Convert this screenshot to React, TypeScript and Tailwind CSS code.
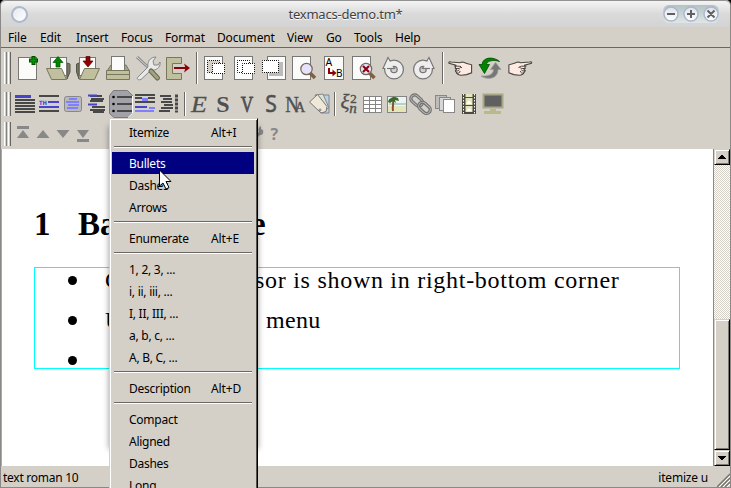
import type { ReactNode } from "react";

const UI = "font-['Noto_Sans','Open_Sans',sans-serif]";
const ROMAN = "font-['Liberation_Serif',serif]";

/* Icons share the window's coordinate space: each cell is a view onto it. */
function Cell({ x, y, s, h, children }: { x: number; y: number; s: number; h?: number; children?: ReactNode }) {
  return (
    <svg width={s} height={h ?? s} viewBox={`${x} ${y} ${s} ${h ?? s}`} className="block shrink-0 overflow-visible">
      {children}
    </svg>
  );
}

function Grip({ tall }: { tall?: boolean }) {
  return (
    <div className={`flex shrink-0 gap-px ${tall ? "h-8" : "h-6"} w-[9px] pl-0.5 mr-0.5`}>
      <div className="w-[3px] border-l border-r border-l-white border-r-[#85827c]" />
      <div className="w-[3px] border-l border-r border-l-white border-r-[#666460]" />
    </div>
  );
}

function Separator({ className }: { className: string }) {
  return <div className={`w-0.5 shrink-0 border-l border-r border-l-[#6a6864] border-r-white ${className}`} />;
}

const menus: [string, string][] = [
  ["File", "w-[32px]"],
  ["Edit", "w-[36px]"],
  ["Insert", "w-[45px]"],
  ["Focus", "w-[44px]"],
  ["Format", "w-[52px]"],
  ["Document", "w-[70px]"],
  ["View", "w-[39px]"],
  ["Go", "w-[28px]"],
  ["Tools", "w-[41px]"],
  ["Help", "w-[40px]"],
];

function TitleBar() {
  return (
    <div className="flex h-[27px] items-center rounded-t-[5px] border-t border-t-[#929292] bg-linear-to-b from-[#f4f4f4] via-[#dadada] via-50% to-[#d3d3d3] pl-[10px] pr-[10px]">
      <div className="size-[17px] rounded-full border-2 border-[#aeb9ca] bg-linear-to-br from-[#e4e9f0] to-white" />
      <div className="flex-1 pl-[1px] text-center text-[13px] leading-[28px] tracking-[-0.22px] text-[#414141] [text-shadow:0_1px_0_#fff]">texmacs-demo.tm*</div>
      <svg width="58" height="20" viewBox="662 4 58 20">
        <defs>
          <linearGradient id="ball" x2="0" y2="1"><stop stopColor="#dde2e9" /><stop offset="1" stopColor="#fff" /></linearGradient>
          <linearGradient id="halo" x2="0" y2="1"><stop stopColor="#b3c2c4" /><stop offset="1" stopColor="#dfe7e6" /></linearGradient>
        </defs>
        <rect x="663" y="5" width="56" height="18" rx="6" fill="url(#halo)" />
        {[671, 691, 711].map((x) => <circle key={x} cx={x} cy="14" r="7" fill="url(#ball)" stroke="#abb5cc" strokeWidth="1.4" />)}
        <path d="M667 14h8M687 14h8M691 10v8M707.5 10.5l7 7M714.5 10.5l-7 7" stroke="#626262" strokeWidth="2" />
      </svg>
    </div>
  );
}

function MenuBar() {
  return (
    <div className="flex h-[21px] border-b border-[#6a6864] pl-[7px]">
      {menus.map(([name, w]) => (
        <div key={name} className={`${w} shrink-0 whitespace-nowrap text-[12px] leading-[22px] tracking-[-0.15px]`}>{name}</div>
      ))}
    </div>
  );
}

const hand = (
  <>
    <path d="M449 63.2C448.400 62 449.600 61.700 451 62l9 .8 1.800-.8c3 .3 4 1.500 6 1.800l3.800 1v8l-5 1.800-5.200.6c-3-.2-4.500-1.200-4.800-2.600l-1.200-1.600 1-1.800-1-1.500.500-2.500L449 63.200Z" fill="#fdeae2" stroke="#484440" strokeWidth="1.100" />
    <path d="M454 66l5 .2c2 0 2 2 0 2.200l-4.200.2M455 70.500c2 .8 4 .5 4.200-1M456.500 73c1.800.5 3.600 0 3.500-2M460 66l2 2" fill="none" stroke="#484440" />
  </>
);

function Dotted({ x, y, w, h, fill }: { x: number; y: number; w: number; h: number; fill: string }) {
  return <rect x={x} y={y} width={w} height={h} fill={fill} stroke="#111" strokeDasharray="1 1" strokeDashoffset=".5" />;
}

function MainToolbar() {
  const paper = { fill: "#fbfbfa", stroke: "#777", strokeWidth: 1 };
  const lens = (
    <>
      <path d="M310 73l5 5" stroke="#80603f" strokeWidth="3.500" />
      <circle cx="306.500" cy="69" r="5.700" fill="#e6e2fb" stroke="#76665b" strokeWidth="1.200" />
    </>
  );
  const undo = (
    <>
      <circle cx="394" cy="69.500" r="6.300" fill="none" stroke="#777" strokeWidth="7.500" />
      <path d="M383 68.500L388 57.500l6.500 11Z" fill="#eee" stroke="#777" strokeWidth="1.200" />
      <circle cx="394" cy="69.500" r="6.300" fill="none" stroke="#eee" strokeWidth="5" />
      <path d="M384.300 67.700L388.200 59.500l3.300 6Z" fill="#eee" />
      <path d="M387 68.500h7" stroke="#777" strokeWidth="1.200" />
    </>
  );
  return (
    <div className="flex h-[40px] items-center pl-px">
      <Grip tall />
      <Cell x={13} y={53} s={30}>
        <rect x="18.500" y="57.500" width="18" height="22" {...paper} />
        <path d="M33.500 56v9M29 60.500h9" stroke="#004d00" strokeWidth="4" /><path d="M33.500 57v7M30 60.500h7" stroke="#009500" strokeWidth="2" />
      </Cell>
      <Cell x={43} y={53} s={30}>
        <path d="M67 63l3 1v8l-3 7Z" fill="#787862" stroke="#555547" />
        <rect x="50.500" y="57.500" width="16" height="18" {...paper} />
        <path d="M46.500 68.500h15l5 11h-15Z" fill="#c0c09e" stroke="#77775e" />
        <path d="M58 56.500l-5 6h3V67h4v-4.500h3Z" fill="#008500" stroke="#005300" strokeWidth=".7" />
      </Cell>
      <Cell x={73} y={53} s={30}>
        <path d="M79 63l-2.500 1v8l2.500 7Z" fill="#787862" stroke="#555547" />
        <rect x="79.500" y="57.500" width="16" height="18" {...paper} />
        <path d="M84.500 68.500h15l-5 11h-15Z" fill="#c0c09e" stroke="#77775e" />
        <path d="M88 67l-5-6h3v-4.500h4V61h3Z" fill="#900000" stroke="#5a0000" strokeWidth=".7" />
      </Cell>
      <Cell x={103} y={53} s={30}>
        <path d="M107 71l4-6h15l3.500 6Z" fill="#a4a485" stroke="#77775e" />
        <rect x="111.500" y="56.500" width="13" height="14" {...paper} />
        <path d="M106.500 70.500h23v9h-23ZM106.500 74.500h23" fill="#c0c09e" stroke="#77775e" />
      </Cell>
      <Cell x={133} y={53} s={30}>
        <path d="M137 57l15 14" stroke="#888" strokeWidth="3" /><path d="M137 57l15 14" stroke="#ddd" />
        <path d="M138 77l10-10c-1-5 2-10 8-10l-3 4 1 4 4 0 2-3c1 6-5 9-9 8l-10 9.500c-3 1-5-1-3-2.500Z" fill="#e9e9e9" stroke="#888" />
        <path d="M151 71l6.500 7" stroke="#66664e" strokeWidth="5" strokeLinecap="round" /><path d="M151 71l6.500 7" stroke="#a2a27c" strokeWidth="3" strokeLinecap="round" />
      </Cell>
      <Cell x={163} y={53} s={30}>
        <path d="M166.500 57.500h15v6h-9v10h9v6h-15Z" fill="#c0c09e" stroke="#77775e" />
        <path d="M174 68h12" stroke="#8b0007" strokeWidth="2" /><path d="M184 63.500l6 4.500-6 4.500 1.500-4.500Z" fill="#8b0007" />
      </Cell>
      <Separator className="ml-[3px] mr-[2px] h-8" />
      {[200, 230].map((x, i) => (
        <Cell key={x} x={x} y={53} s={30}>
          <g transform={`translate(${x - 200})`}>
            <rect x="204.500" y="56.500" width="18" height="23" {...paper} />
            <Dotted x={207.5} y={60.5} w={12} h={12} fill={i ? "#fff" : "#d4d0c8"} />
            <Dotted x={212.5} y={63.5} w={12} h={10} fill="#fff" />
          </g>
        </Cell>
      ))}
      <Cell x={260} y={53} s={30}>
        <rect x="267.500" y="56.500" width="18" height="23" {...paper} /><rect x="269" y="62" width="14" height="14" fill="#bbb" />
        <Dotted x={262.5} y={60.5} w={16} h={12} fill="#fff" />
      </Cell>
      <Cell x={290} y={53} s={30}><rect x="292.500" y="56.500" width="18" height="23" {...paper} />{lens}</Cell>
      <Cell x={320} y={53} s={30}>
        <rect x="324.500" y="56.500" width="19" height="23" {...paper} />
        <text x="325.500" y="66" fontSize="10.500" fontFamily="Noto Sans">A</text><text x="336" y="77" fontSize="10" fontFamily="Noto Sans">B</text>
        <path d="M329 68v5h5" fill="none" stroke="#8b0007" strokeWidth="2" /><path d="M332.500 69.500l4 3.500-4 3.500Z" fill="#8b0007" />
      </Cell>
      <Cell x={350} y={53} s={30}>
        <rect x="352.500" y="56.500" width="18" height="23" {...paper} /><g transform="translate(59.500)">{lens}</g>
        <path d="M363 66l6 6M369 66l-6 6" stroke="#8b0007" strokeWidth="2" />
      </Cell>
      <Cell x={380} y={53} s={30}>{undo}</Cell>
      <Cell x={410} y={53} s={30}><g transform="translate(817) scale(-1 1)">{undo}</g></Cell>
      <Separator className="ml-[2px] mr-[2px] h-8" />
      <Cell x={446} y={53} s={30}>{hand}</Cell>
      <Cell x={476} y={53} s={30}>
        <path d="M499.500 61.500C494 56.500 483 56.500 482 64.500h-3l5.500 9 5-9h-3c0-4 8-5 13-3Z" fill="#008500" stroke="#004d00" strokeWidth=".8" />
        <path d="M481 76c6 4 17 3.500 17-6.500h3l-5.500-7-5 7h3c0 6-7 7-12.500 6.500Z" fill="#777" stroke="#999" strokeWidth=".8" />
      </Cell>
      <Cell x={506} y={53} s={30}><g transform="translate(980.500) scale(-1 1)">{hand}</g></Cell>
    </div>
  );
}

function Bars({ d, color = "#484848" }: { d: string; color?: string }) {
  return <path d={d} stroke={color} strokeWidth="2" fill="none" />;
}

function ModeToolbar() {
  const letter = { fill: "#505050", textAnchor: "middle" as const, fontFamily: "Liberation Serif" };
  return (
    <div className="flex h-[31px] items-center pl-px pt-px">
      <Grip />
      <Cell x={13} y={92} s={24}><path d="M15 96.500h16" stroke="#4545cc" strokeWidth="3" /><Bars d="M15 100h20M15 103h20M15 106h20M15 109h20M15 112h20" /></Cell>
      <Cell x={37} y={92} s={24}>
        <Bars d="M39 96h20M39 111h20" /><Bars color="#4545cc" d="M48 102h11M39 107h20" />
        <text x="39" y="105" fontSize="6" fontWeight="bold" fontFamily="DejaVu Sans" fill="#4545cc" textLength="8" lengthAdjust="spacingAndGlyphs">TH</text>
      </Cell>
      <Cell x={61} y={92} s={24}>
        <rect x="64.500" y="96.500" width="17" height="15" rx="2" fill="#b9b9b9" stroke="#888" /><Bars color="#8080ff" d="M69 99h8M66 102h13M68 105h11M67 108h11" />
      </Cell>
      <Cell x={85} y={92} s={24}><Bars d="M90 96h12M91 99h13M90 101h13M92 107h13M90 110h15M93 112h11" /><Bars color="#4545cc" d="M88 95.500h9M88 104.500h9" /></Cell>
      <Cell x={109} y={90} s={24} h={28}>
        <path d="M113.500 90.500h14l5 5v18l-4.500 4h-14l-4.500-4v-18Z" fill="#a2a2a8" stroke="#7b7b7f" /><path d="M128 117.500l4.500-4V96" fill="none" stroke="#fff" />
        <Bars d="M117 97h15M117 104h15M117 111h15" /><circle cx="113.500" cy="97" r="1.300" /><circle cx="113.500" cy="104" r="1.300" /><circle cx="113.500" cy="111" r="1.300" />
      </Cell>
      <Cell x={133} y={92} s={24}><Bars d="M135 95h20M135 98h7M148 98h7M135 102h20" /><path d="M142 99.500h6" stroke="#8080ff" strokeWidth="3" /><Bars color="#4545cc" d="M135 107h12" /><Bars color="#8080ff" d="M149 108h6M135 111h19" /></Cell>
      <Cell x={157} y={92} s={24}><Bars d="M160 96h11M163 99h9M161 102h11M164 105h9M161 108h12M159 111h11" /><path d="M176.500 94.500v18" stroke="#484848" strokeWidth="3" strokeDasharray="3 1" /></Cell>
      <Separator className="ml-[3px] mr-[2px] h-6" />
      <Cell x={188} y={92} s={24}><text transform="translate(199 112) scale(1.080 1)" {...letter} fontSize="24" fontStyle="italic" stroke="#505050" strokeWidth=".3">E</text></Cell>
      <Cell x={212} y={92} s={24}><text x="223" y="112" {...letter} fontSize="24" fontWeight="bold">S</text></Cell>
      <Cell x={236} y={92} s={24}><text transform="translate(247 112) scale(.75 1)" {...letter} fontSize="23" stroke="#505050" strokeWidth=".8">V</text></Cell>
      <Cell x={260} y={92} s={24}><text transform="translate(271 112) scale(.92 1)" {...letter} fontSize="23" fontFamily="Noto Sans" stroke="#505050" strokeWidth=".5">S</text></Cell>
      <Cell x={284} y={92} s={24}>
        <text transform="translate(292 112) scale(.82 1)" {...letter} fontSize="23" stroke="#505050" strokeWidth=".4">N</text><text x="300" y="112" {...letter} fontSize="14" stroke="#505050" strokeWidth=".4">A</text>
      </Cell>
      <Cell x={308} y={92} s={24}>
        <path d="M316 95h13v18h-8Z" fill="#bdd0e6" stroke="#7a8799" /><path d="M315 95l8-1 6 14-7 3Z" fill="#d9e3d2" stroke="#888" />
        <path d="M309.500 102l8-7.500 9.500 12-1 5-5 1.500Z" fill="#eee8d9" stroke="#777" /><circle cx="320" cy="110" r="1" fill="#fff" stroke="#777" />
      </Cell>
      <Separator className="ml-[2px] mr-[2px] h-6" />
      <Cell x={338} y={92} s={24}>
        <text x="345" y="109" {...letter} fontSize="21" fontStyle="italic" stroke="#505050" strokeWidth=".3">ξ</text><text x="353.500" y="103" {...letter} fontSize="13" stroke="#505050" strokeWidth=".4">2</text><text x="353" y="113" {...letter} fontSize="15" fontStyle="italic" stroke="#505050" strokeWidth=".4">n</text>
      </Cell>
      <Cell x={362} y={92} s={24}><path d="M363.500 96.500h18v16h-18ZM363.500 100.500h18M363.500 104.500h18M363.500 108.500h18M369.500 96.500v16M375.500 96.500v16" fill="#fff" stroke="#858585" /></Cell>
      <Cell x={386} y={92} s={24}>
        <rect x="387.500" y="96.500" width="19" height="16" fill="#e9f5f3" stroke="#858585" /><path d="M389 103h17v2h-17Z" fill="#b6cfd0" /><path d="M388 106h18v6h-18Z" fill="#e4e5b8" />
        <path d="M393 111c-1-5 1-7 0-11" stroke="#875033" strokeWidth="2" fill="none" /><path d="M388 102c1-4 3-4 5-4l-2-1h4l3 1 1 3-4-1 1 3-3-2-3 2Z" fill="#386b25" />
      </Cell>
      <Cell x={410} y={92} s={24}>
        {["rotate(42 416.500 100)", "rotate(42 425 108)"].map((t, i) => (
          <g key={t} transform={t}><rect x={i ? 418 : 410.5} y={i ? 104.5 : 96.5} width="13" height="7.500" rx="3.700" fill="none" stroke="#707070" strokeWidth="3.200" /><rect x={i ? 418 : 410.5} y={i ? 104.5 : 96.5} width="13" height="7.500" rx="3.700" fill="none" stroke="#bbb" strokeWidth="1" /></g>
        ))}
      </Cell>
      <Cell x={434} y={92} s={24}><g stroke="#888"><rect x="435.500" y="95.500" width="11" height="13" fill="#bcbcbc" /><rect x="439.500" y="97.500" width="11" height="13" fill="#d6d6d6" /><rect x="443.500" y="99.500" width="11" height="13" fill="#fff" /></g></Cell>
      <Cell x={458} y={92} s={24}>
        <rect x="462" y="94" width="14" height="20" fill="#4b4b40" /><path d="M463.500 94v20M474.500 94v20" stroke="#fff" strokeDasharray="1.500 1.500" />
        <path d="M465.500 94h7v3h-7ZM465.500 98h7v7h-7ZM465.500 106h7v6h-7Z" fill="#e5e5bc" /><path d="M466 104l3-4 3 4ZM466 111l3-3 3 3Z" fill="#fff" />
      </Cell>
      <Cell x={482} y={92} s={24}><rect x="483.500" y="94.500" width="19" height="13" fill="#606060" stroke="#a8a886" strokeWidth="2" /><path d="M490 109h6v2h5v3h-17v-3h6Z" fill="#b9b98b" /></Cell>
    </div>
  );
}

function FocusToolbar() {
  return (
    <div className="flex h-[30px] items-center pl-px">
      <Grip />
      <Cell x={13} y={124} s={20}><path d="M17 126h12v3H17ZM17 138l6-8 6 8Z" fill="#888" /></Cell>
      <Cell x={33} y={124} s={20}><path d="M36.500 138l6.500-8 6.500 8Z" fill="#888" /></Cell>
      <Cell x={53} y={124} s={20}><path d="M56.500 130l6.500 8 6.500-8Z" fill="#888" /></Cell>
      <Cell x={73} y={124} s={20}><path d="M77 130l6 8 6-8ZM77 139h12v3H77Z" fill="#888" /></Cell>
      <div className="w-[152px]" />
      <Cell x={245} y={124} s={20}><path d="M250 140l9-8c-1-3 0-5 2-6v3l2 1c1 4-1 5-3 5l-6 6Z" fill="#888" /></Cell>
      <Cell x={265} y={124} s={20}><text x="270.500" y="140" fontSize="16" fontWeight="bold" fontFamily="Noto Sans" fill="#888">?</text></Cell>
    </div>
  );
}

function Bullet() {
  return <div className="mt-[8px] size-[9px] shrink-0 rounded-full bg-black" />;
}

function Page() {
  return (
    <div className={`h-full flex-1 bg-white pl-[32px] pt-[50px] text-black ${ROMAN}`}>
      <div className="flex h-[68px] text-[33px] leading-[50px] font-bold">
        <div className="w-[44px]">1</div>
        <div className="w-[173px] whitespace-nowrap">Ba</div>
        <div>e</div>
      </div>
      <div className="h-[102px] w-[646px] border border-[#00ffff] pl-[33px] text-[24px] leading-[24px] whitespace-nowrap">
        <div className="flex h-10"><Bullet /><div className="ml-[28px] w-[150px]">C</div><div className="tracking-[0.72px]">sor is shown in right-bottom corner</div></div>
        <div className="flex h-10"><Bullet /><div className="ml-[28px] w-[161px]">U</div><div className="tracking-[0.3px]">menu</div></div>
        <div className="flex"><Bullet /></div>
      </div>
    </div>
  );
}

const bevel = "border border-r-black border-b-black border-l-[#d4d0c8] border-t-[#d4d0c8] bg-[#d4d0c8] shadow-[inset_1px_1px_0_#fff,inset_-1px_-1px_0_#7d7a74]";

function ScrollBar() {
  return (
    <div className="flex w-[17px] flex-col border-l border-[#8b8985] bg-[repeating-conic-gradient(#d4d0c8_0_25%,#fff_0_50%)] bg-[length:2px_2px]">
      <div className={`flex h-[16px] items-center justify-center ${bevel}`}>
        <svg width="8" height="5" shapeRendering="crispEdges"><path d="M3 0h2v1h1v1h1v1h1v1H0V3h1V2h1V1h1Z" /></svg>
      </div>
      <div className="flex-1" />
      <div className={`h-[131px] ${bevel}`} />
      <div className={`flex h-[16px] items-center justify-center ${bevel}`}>
        <svg width="8" height="5" shapeRendering="crispEdges"><path d="M0 0h8v1H7v1H6v1H5v1H3V3H2V2H1V1H0Z" /></svg>
      </div>
    </div>
  );
}

type Entry = "-" | [string, string?];
const entries: Entry[] = [
  ["Itemize", "Alt+I"], "-", ["Bullets"], ["Dashes"], ["Arrows"], "-", ["Enumerate", "Alt+E"], "-",
  ["1, 2, 3, ..."], ["i, ii, iii, ..."], ["I, II, III, ..."], ["a, b, c, ..."], ["A, B, C, ..."], "-",
  ["Description", "Alt+D"], "-", ["Compact"], ["Aligned"], ["Dashes"], ["Long"],
];

function ListMenu() {
  return (
    <div className="absolute left-[109px] top-[118px] h-[370px] w-[149px]">
      <div className="absolute inset-x-0 top-2 h-[323px] shadow-[0_0_6px_rgba(0,0,0,0.4)]" />
      <div className="relative h-[380px] border-l border-t border-r border-[#d4d0c8] border-r-black bg-[#d4d0c8] pl-0.5 pr-0.5 pt-0.5 shadow-[inset_1px_1px_0_#fff,inset_-1px_0_0_#55524c]">
        {entries.map((e, i) =>
          e === "-" ? (
            <div key={i} className="h-[9px] pl-[2px] pr-[3px] pt-[3px]"><div className="h-0.5 border-t border-b border-t-[#6a6864] border-b-white" /></div>
          ) : (
            <div key={i} className={`mr-px flex h-[22px] text-[12px] leading-[24px] whitespace-nowrap ${i === 2 ? "bg-[#000080] text-white" : "text-black"}`}>
              <div className="w-[82px] pl-[17px] tracking-[-0.26px]">{e[0]}</div>
              <div className="pl-[17px] tracking-[-0.1px]">{e[1]}</div>
            </div>
          ),
        )}
      </div>
    </div>
  );
}

export default function App() {
  return (
    <div className={`relative h-[488px] w-[731px] overflow-hidden bg-black text-black ${UI}`}>
      <div className="flex h-full flex-col rounded-t-[5px] border-b border-l border-r border-[#8b8985] bg-[#d4d0c8]">
        <TitleBar />
        <MenuBar />
        <MainToolbar />
        <ModeToolbar />
        <FocusToolbar />
        <div className="flex h-[317px] shrink-0 border-l border-[#aaa]"><Page /><ScrollBar /></div>
        <div className="flex h-[21px] shrink-0 justify-between pl-[2px] text-[12px] leading-[24px]">
          <span className="tracking-[-0.26px]">text roman 10</span>
          <div className="flex"><span className="tracking-[-0.2px]">itemize u</span>
            <svg width="13" height="21" className="ml-[9px]"><path d="M0 21L13 8M4 21l9-9M8 21l5-5" stroke="#77746e" strokeWidth="1.500" /><path d="M2 21L13 10M6 21l7-7M10 21l3-3" stroke="#fff" /></svg>
          </div>
        </div>
      </div>
      <ListMenu />
      <svg width="15" height="22" viewBox="0 0 15 22" className="absolute left-[158px] top-[169px]"><path d="M1.500 1v16l3.500-3 3 6 3-1.500-3-6h5Z" fill="#fff" stroke="#000" /></svg>
    </div>
  );
}
